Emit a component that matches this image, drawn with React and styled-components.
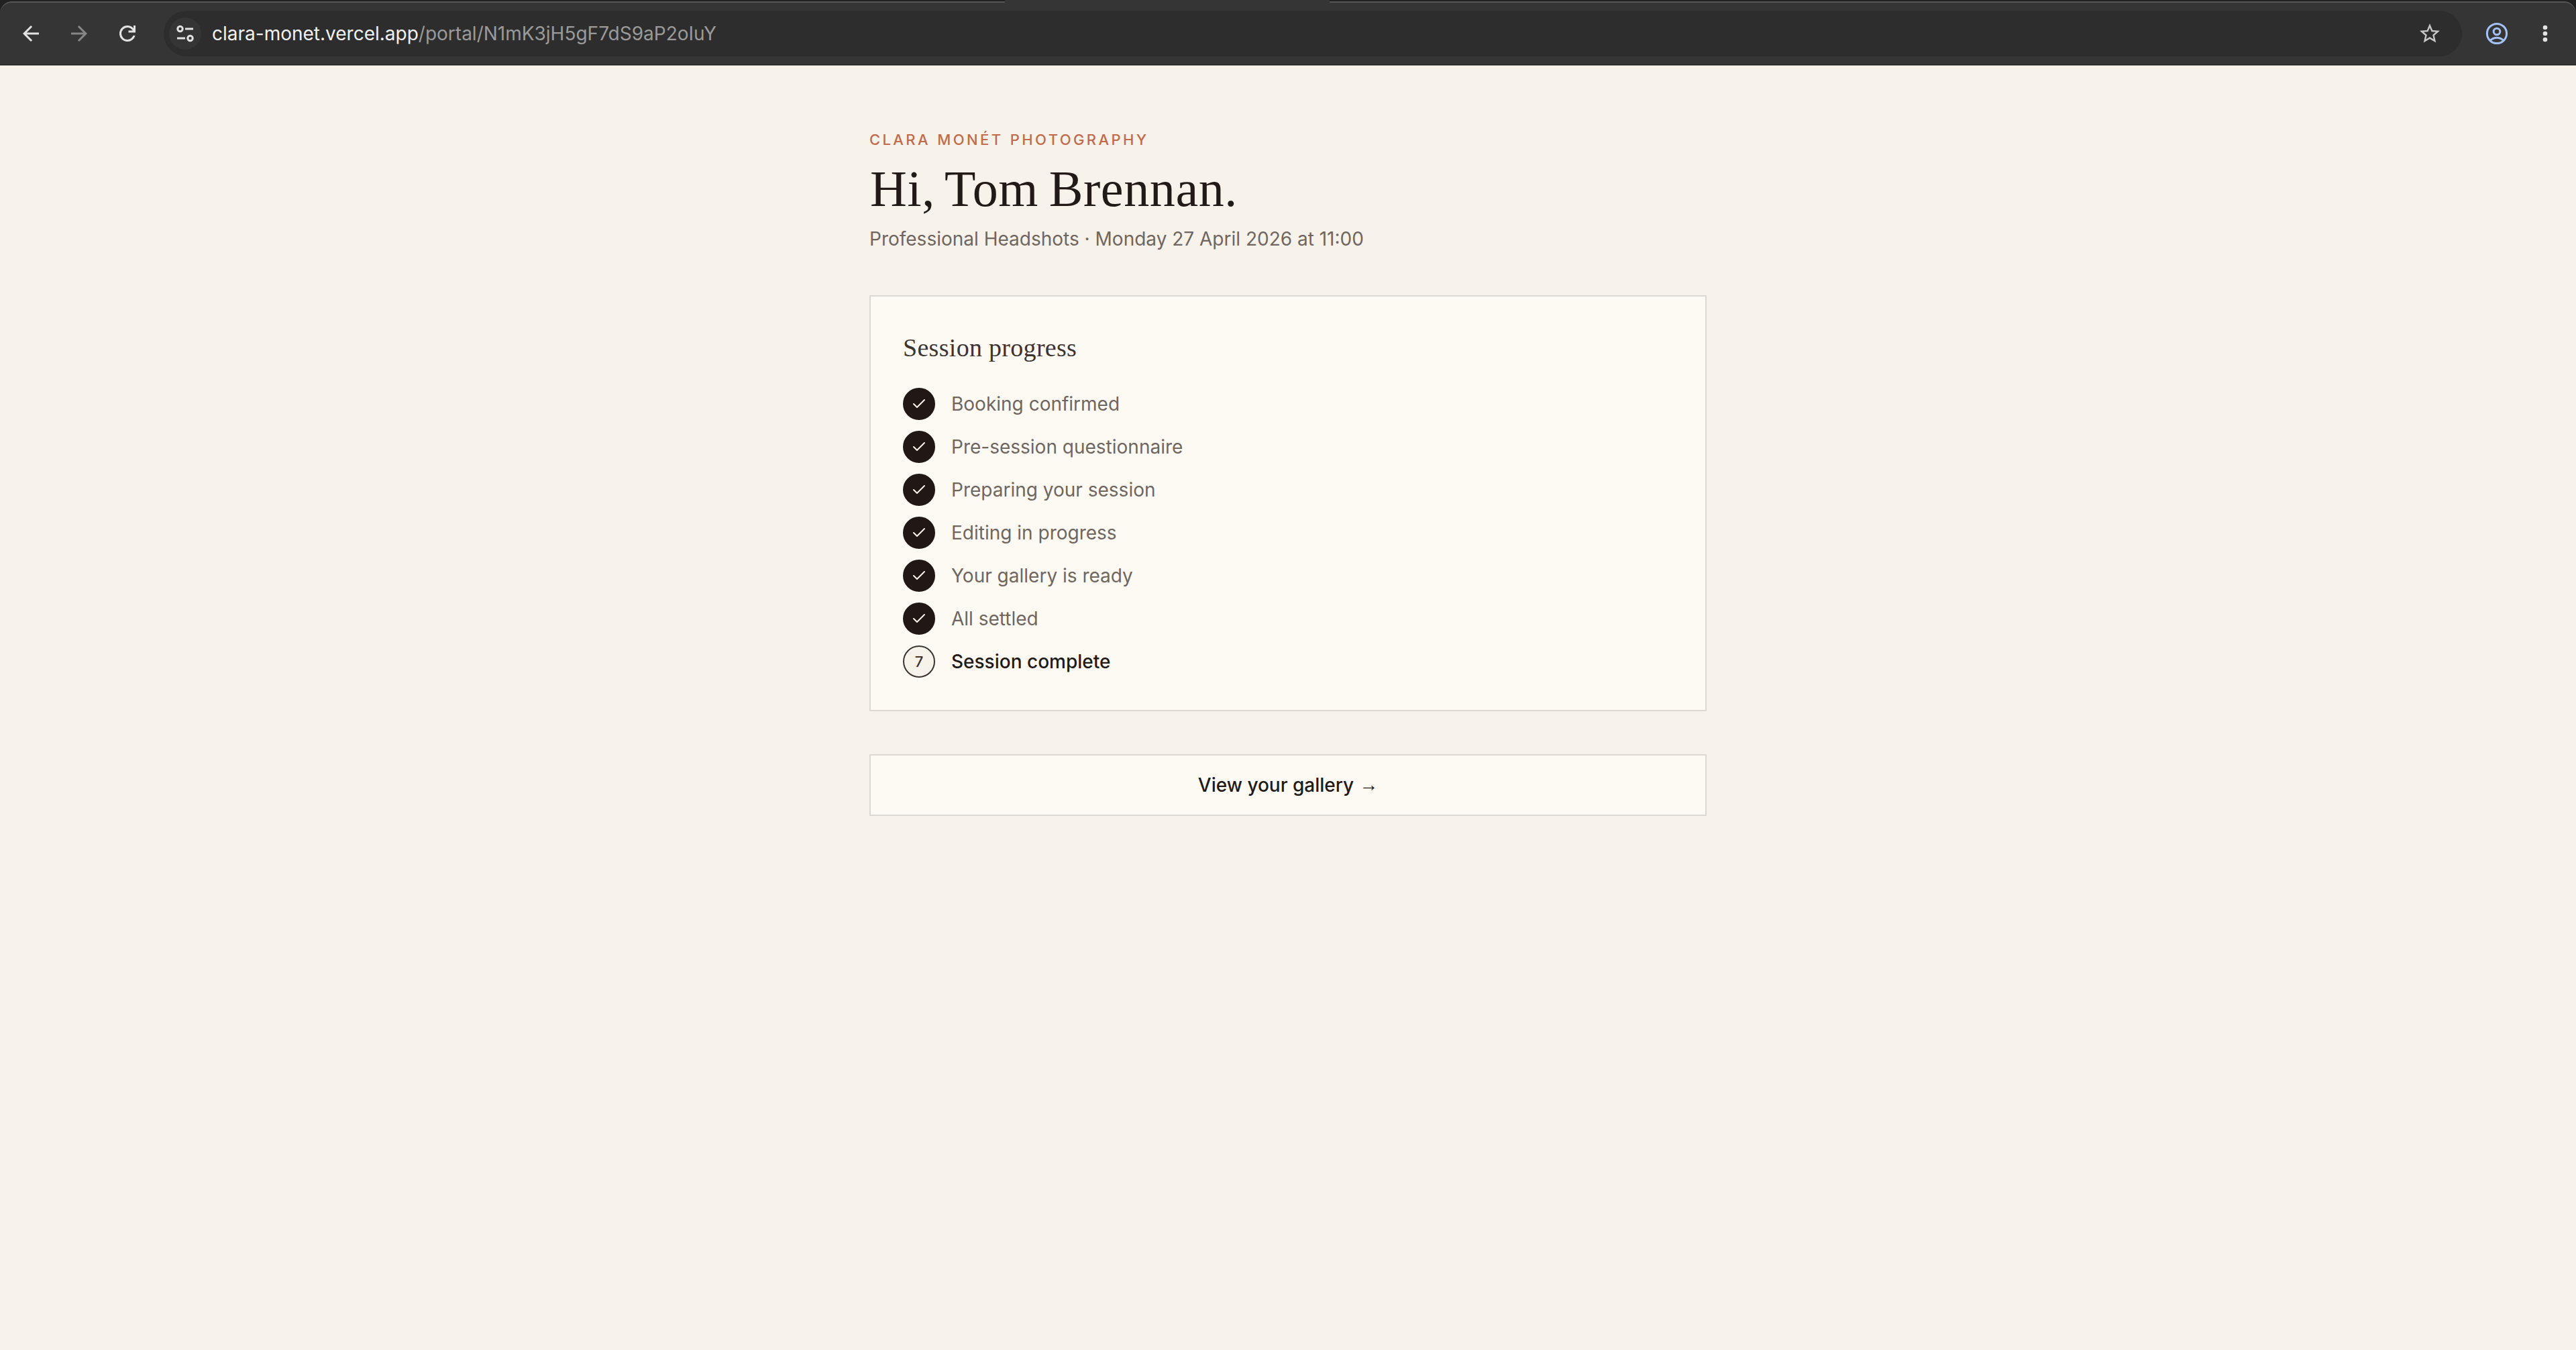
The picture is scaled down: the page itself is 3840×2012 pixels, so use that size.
import React from "react";
import styled, { createGlobalStyle } from "styled-components";
import { Check } from "lucide-react";
import { MdStarBorder } from "react-icons/md";

const GlobalStyle = createGlobalStyle`
  * {
    box-sizing: border-box;
  }

  body {
    margin: 0;
    background: #f7f2ea;
    font-family: Inter, "Liberation Sans", sans-serif;
  }

  h1, h2, p, ul {
    margin: 0;
    padding: 0;
    font-weight: 400;
  }
`;

const Window = styled.div`
  min-height: 2012px;
  background: #f7f2ea;
`;

// browser chrome

const Chrome = styled.header`
  height: 98px;
  display: flex;
  flex-direction: column;
  background: #212121;
  border-bottom: 1px solid #8f8c88;
`;

const TabStrip = styled.div`
  height: 2px;
  display: flex;
  justify-content: flex-start;
  padding-left: 1498px;
`;

const ActiveTab = styled.div`
  width: 484px;
  height: 4px;
  flex: none;
  z-index: 1;
  background: #353535;
`;

const Toolbar = styled.div`
  height: 95px;
  display: flex;
  align-items: center;
  padding: 0 28px;
  background: #353535;
  border-top: 2px solid #545454;
  border-bottom: 1px solid #1d1f1e;
  border-radius: 18px 18px 0 0;
`;

const NavButton = styled.span`
  display: flex;
  width: 36px;
  height: 36px;
  margin-right: ${(props) => props.$gap || 0}px;
  color: ${(props) => props.$color || "#e3e3e3"};

  svg {
    display: block;
    width: 36px;
    height: 36px;
  }
`;

const AddressBar = styled.div`
  flex: 1;
  height: 68px;
  margin-right: 34px;
  padding: 0 30px 0 8px;
  display: flex;
  align-items: center;
  border-radius: 34px;
  background: #2d2d2d;
`;

const SiteChip = styled.span`
  width: 48px;
  height: 48px;
  margin-right: 16px;
  display: flex;
  align-items: center;
  justify-content: center;
  border-radius: 50%;
  background: #353535;
`;

const Url = styled.span`
  flex: 1;
  font-size: 28px;
  line-height: 40px;
  color: #9a9a9a;
  white-space: nowrap;

  strong {
    font-weight: 400;
    color: #f1f1f1;
  }
`;

// portal

const Page = styled.main`
  width: 1248px;
  margin: 0 auto;
  padding-top: 94px;
`;

const Eyebrow = styled.p`
  font-size: 22px;
  line-height: 32px;
  font-weight: 500;
  letter-spacing: 3.4px;
  word-spacing: 1px;
  text-transform: uppercase;
  color: #c46a48;
`;

const Greeting = styled.h1`
  margin-top: 17px;
  padding-left: 1px;
  font-family: "Liberation Serif", serif;
  font-size: 76px;
  line-height: 80px;
  letter-spacing: 0.6px;
  word-spacing: -4px;
  color: #211a17;
`;

const Details = styled.p`
  margin-top: 15px;
  font-size: 28px;
  line-height: 40px;
  color: #6f6660;
`;

const Card = styled.section`
  margin-top: 64px;
  padding: 48px;
  background: #fdfaf4;
  border: 2px solid #ddd9d1;
`;

const CardTitle = styled.h2`
  margin-bottom: 32px;
  font-family: "Liberation Serif", serif;
  font-size: 38px;
  line-height: 56px;
  letter-spacing: 0.3px;
  color: #3b3430;
`;

const Steps = styled.ul`
  display: flex;
  flex-direction: column;
  gap: 16px;
  list-style: none;
`;

const Step = styled.li`
  display: flex;
  align-items: center;
  gap: 24px;
  font-size: 28px;
  line-height: 40px;
  font-weight: ${(props) => (props.$current ? 500 : 400)};
  color: ${(props) => (props.$current ? "#211a17" : "#6f6660")};
`;

const Marker = styled.span`
  width: 48px;
  height: 48px;
  display: flex;
  align-items: center;
  justify-content: center;
  border-radius: 50%;
  border: 2px solid ${(props) => (props.$current ? "#3b3430" : "#211815")};
  background: ${(props) => (props.$current ? "#f7f2ea" : "#211815")};
  color: ${(props) => (props.$current ? "#3b3430" : "#f7f2ea")};
  font-size: 22px;
  line-height: 1;
  font-weight: 500;
`;

const GalleryLink = styled.a`
  margin-top: 64px;
  height: 92px;
  display: flex;
  align-items: center;
  justify-content: center;
  border: 2px solid #ddd9d1;
  background: #fdfaf4;
  color: #211a17;
  font-size: 28px;
  line-height: 40px;
  font-weight: 500;
`;

const Arrow = styled.span`
  margin-left: 8px;
  font-family: "Liberation Serif", serif;
  font-size: 28px;
`;

const steps = [
  "Booking confirmed",
  "Pre-session questionnaire",
  "Preparing your session",
  "Editing in progress",
  "Your gallery is ready",
  "All settled",
  "Session complete",
];

const BackIcon = () => (
  <svg viewBox="0 -960 960 960" fill="currentColor">
    <path d="m313-440 224 224-57 56-320-320 320-320 57 56-224 224h487v80H313Z" />
  </svg>
);

const ForwardIcon = () => (
  <svg viewBox="0 -960 960 960" fill="currentColor">
    <path d="M647-440H160v-80h487L423-744l57-56 320 320-320 320-57-56 224-224Z" />
  </svg>
);

const ReloadIcon = () => (
  <svg viewBox="0 -960 960 960" fill="currentColor">
    <path d="M480-160q-134 0-227-93t-93-227q0-134 93-227t227-93q69 0 132 28.5T720-690v-110h80v280H520v-80h168q-32-56-87.5-88T480-720q-100 0-170 70t-70 170q0 100 70 170t170 70q77 0 139-44t87-116h84q-28 106-114 173t-196 67Z" />
  </svg>
);

const TuneIcon = () => (
  <svg width="28" height="28" viewBox="0 0 28 28" fill="none" stroke="#e3e3e3" strokeWidth="3">
    <circle cx="6.5" cy="7" r="3.7" />
    <path d="M14 7h12M2 21h12" />
    <circle cx="21.5" cy="21" r="3.7" />
  </svg>
);

const AccountIcon = () => (
  <svg viewBox="0 0 36 36" fill="none" stroke="currentColor" strokeWidth="3">
    <circle cx="18" cy="18" r="14.6" />
    <circle cx="18" cy="15" r="4.8" />
    <path d="M8.2 28.3q4.2-4 9.8-4t9.8 4" />
  </svg>
);

const MenuIcon = () => (
  <svg viewBox="0 0 36 36" fill="currentColor">
    <circle cx="18" cy="9" r="3.3" />
    <circle cx="18" cy="18" r="3.3" />
    <circle cx="18" cy="27" r="3.3" />
  </svg>
);

const BrowserBar = () => (
  <Chrome>
    <TabStrip>
      <ActiveTab />
    </TabStrip>
    <Toolbar>
      <NavButton $gap={36}>
        <BackIcon />
      </NavButton>
      <NavButton $gap={36} $color="#868686">
        <ForwardIcon />
      </NavButton>
      <NavButton $gap={36}>
        <ReloadIcon />
      </NavButton>
      <AddressBar>
        <SiteChip>
          <TuneIcon />
        </SiteChip>
        <Url>
          <strong>clara-monet.vercel.app</strong>/portal/N1mK3jH5gF7dS9aP2oIuY
        </Url>
        <NavButton $color="#c7c7c7">
          <MdStarBorder />
        </NavButton>
      </AddressBar>
      <NavButton $gap={36} $color="#a3c1f5">
        <AccountIcon />
      </NavButton>
      <NavButton>
        <MenuIcon />
      </NavButton>
    </Toolbar>
  </Chrome>
);

const ProgressCard = () => (
  <Card>
    <CardTitle>Session progress</CardTitle>
    <Steps>
      {steps.map((step, i) => {
        const current = i === steps.length - 1;
        return (
          <Step key={step} $current={current}>
            <Marker $current={current}>
              {current ? i + 1 : <Check size={24} strokeWidth={2} />}
            </Marker>
            {step}
          </Step>
        );
      })}
    </Steps>
  </Card>
);

const App = () => {
  return (
    <>
      <GlobalStyle />
      <Window>
        <BrowserBar />
        <Page>
          <Eyebrow>Clara Monét Photography</Eyebrow>
          <Greeting>Hi, Tom Brennan.</Greeting>
          <Details>Professional Headshots · Monday 27 April 2026 at 11:00</Details>
          <ProgressCard />
          <GalleryLink>
            View your gallery <Arrow>→</Arrow>
          </GalleryLink>
        </Page>
      </Window>
    </>
  );
};

export default App;
